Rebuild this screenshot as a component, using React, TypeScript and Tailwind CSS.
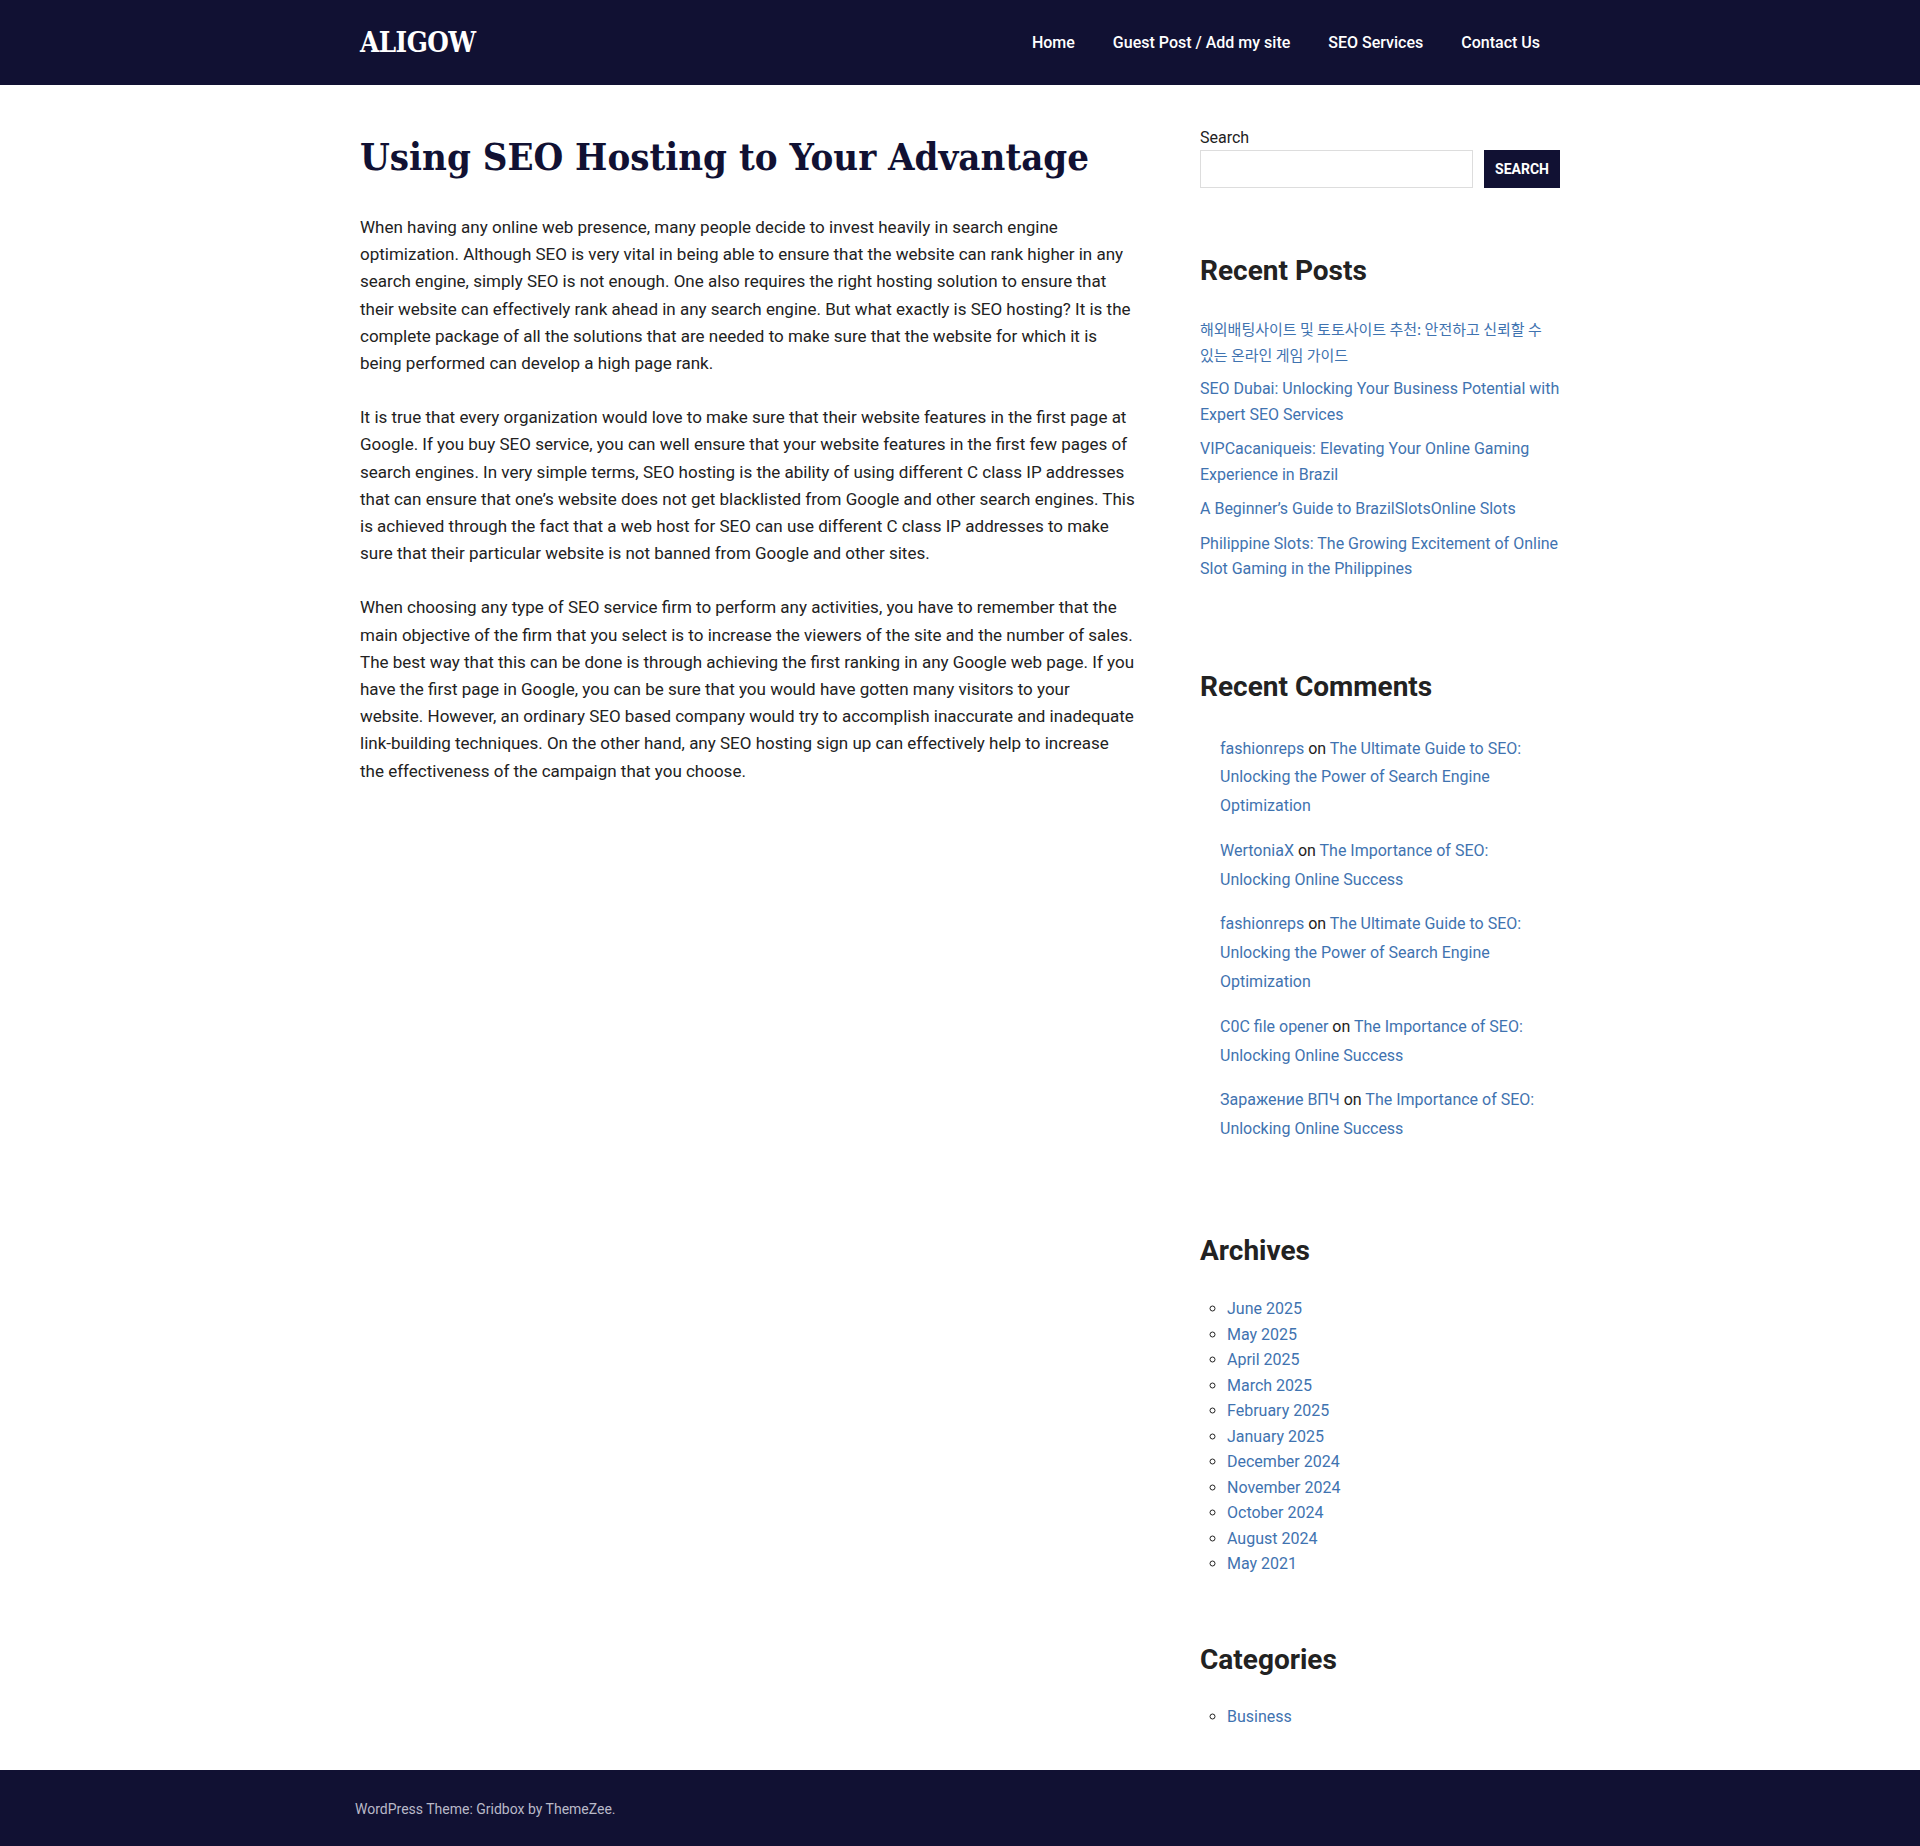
import type { ReactNode } from "react";

const recentPosts = [
  "해외배팅사이트 및 토토사이트 추천: 안전하고 신뢰할 수 있는 온라인 게임 가이드",
  "SEO Dubai: Unlocking Your Business Potential with Expert SEO Services",
  "VIPCacaniqueis: Elevating Your Online Gaming Experience in Brazil",
  "A Beginner’s Guide to BrazilSlotsOnline Slots",
  "Philippine Slots: The Growing Excitement of Online Slot Gaming in the Philippines",
];

const recentComments = [
  { author: "fashionreps", post: "The Ultimate Guide to SEO: Unlocking the Power of Search Engine Optimization" },
  { author: "WertoniaX", post: "The Importance of SEO: Unlocking Online Success" },
  { author: "fashionreps", post: "The Ultimate Guide to SEO: Unlocking the Power of Search Engine Optimization" },
  { author: "C0C file opener", post: "The Importance of SEO: Unlocking Online Success" },
  { author: "Заражение ВПЧ", post: "The Importance of SEO: Unlocking Online Success" },
];

const archives = [
  "June 2025",
  "May 2025",
  "April 2025",
  "March 2025",
  "February 2025",
  "January 2025",
  "December 2024",
  "November 2024",
  "October 2024",
  "August 2024",
  "May 2021",
];

const navItems = ["Home", "Guest Post / Add my site", "SEO Services", "Contact Us"];

const slab = "font-['DejaVu_Serif',serif] [font-stretch:condensed]";
const link = "text-[#3f73b0] hover:underline";

// hangul titles render wider in Noto CJK than in the original font, so they get a smaller size
const isKorean = (s: string) => /[\uac00-\ud7af]/.test(s);

function WidgetTitle({ children }: { children: ReactNode }) {
  return <h2 className="text-[28px] font-bold leading-[39px] text-[#222]">{children}</h2>;
}

function Header() {
  return (
    <header className="h-[85px] bg-[#111133]">
      <div className="mx-auto flex h-full w-[1200px] items-center justify-between">
        <a href="#" className={`${slab} text-[27.5px] font-bold tracking-[-0.5px] text-white`}>
          ALIGOW
        </a>
        <nav className="flex items-center">
          {navItems.map((item) => (
            <a key={item} href="#" className="px-[19px] text-[16px] font-medium text-white last:pr-[20px]">
              {item}
            </a>
          ))}
        </nav>
      </div>
    </header>
  );
}

function Article() {
  return (
    <main className="w-[775px] pt-[44px]">
      <h1 className={`${slab} mb-[29px] text-[38px] font-bold leading-[56px] text-[#111133]`}>
        Using SEO Hosting to Your Advantage
      </h1>
      <div className="text-[17px] leading-[27.2px] text-[#222]">
        <p className="mb-[27px]">
          When having any online web presence, many people decide to invest heavily in search engine
          optimization. Although SEO is very vital in being able to ensure that the website can rank higher in
          any search engine, simply SEO is not enough. One also requires the right hosting solution to ensure
          that their website can effectively rank ahead in any search engine. But what exactly is SEO hosting?
          It is the complete package of all the solutions that are needed to make sure that the website for
          which it is being performed can develop a high page rank.
        </p>
        <p className="mb-[27px]">
          It is true that every organization would love to make sure that their website features in the first
          page at Google. If you buy SEO service, you can well ensure that your website features in the first
          few pages of search engines. In very simple terms, SEO hosting is the ability of using different C
          class IP addresses that can ensure that one’s website does not get blacklisted from Google and other
          search engines. This is achieved through the fact that a web host for SEO can use different C class IP
          addresses to make sure that their particular website is not banned from Google and other sites.
        </p>
        <p>
          When choosing any type of SEO service firm to perform any activities, you have to remember that the
          main objective of the firm that you select is to increase the viewers of the site and the number of
          sales. The best way that this can be done is through achieving the first ranking in any Google web
          page. If you have the first page in Google, you can be sure that you would have gotten many visitors
          to your website. However, an ordinary SEO based company would try to accomplish inaccurate and
          inadequate link-building techniques. On the other hand, any SEO hosting sign up can effectively help
          to increase the effectiveness of the campaign that you choose.
        </p>
      </div>
    </main>
  );
}

function Sidebar() {
  return (
    <aside className="w-[360px] pt-[41px] pb-[41px] text-[16px] text-[#222]">
      <section>
        <label htmlFor="search" className="block leading-[24px]">
          Search
        </label>
        <div className="flex gap-[11px]">
          <input id="search" type="search" className="h-[38px] w-[273px] border border-[#dddddd] bg-white px-2 outline-none" />
          <button className="h-[38px] w-[76px] bg-[#111133] text-[14px] font-bold uppercase text-white">
            Search
          </button>
        </div>
      </section>

      <section className="mt-[63px]">
        <WidgetTitle>Recent Posts</WidgetTitle>
        <ul className="mt-[26px] flex flex-col gap-[9px] leading-[25.5px]">
          {recentPosts.map((post) => (
            <li key={post}>
              <a
                href="#"
                className={`${link} ${isKorean(post) ? "block font-['Noto_Sans_CJK_KR',sans-serif] text-[15px] break-keep" : ""}`}
              >
                {post}
              </a>
            </li>
          ))}
        </ul>
      </section>

      <section className="mt-[85px]">
        <WidgetTitle>Recent Comments</WidgetTitle>
        <ol className="mt-[29px] flex flex-col gap-[16px] pl-5 leading-[28.8px]">
          {recentComments.map((c, i) => (
            <li key={i}>
              <a href="#" className={link}>
                {c.author}
              </a>{" "}
              on{" "}
              <a href="#" className={link}>
                {c.post}
              </a>
            </li>
          ))}
        </ol>
      </section>

      <section className="mt-[87px]">
        <WidgetTitle>Archives</WidgetTitle>
        <ul className="mt-[26px] list-[circle] pl-[27px] leading-[25.5px]">
          {archives.map((a) => (
            <li key={a}>
              <a href="#" className={link}>
                {a}
              </a>
            </li>
          ))}
        </ul>
      </section>

      <section className="mt-[63px]">
        <WidgetTitle>Categories</WidgetTitle>
        <ul className="mt-[25px] list-[circle] pl-[27px] leading-[25.5px]">
          <li>
            <a href="#" className={link}>
              Business
            </a>
          </li>
        </ul>
      </section>
    </aside>
  );
}

function Footer() {
  return (
    <footer className="h-[78px] bg-[#111133]">
      <div className="mx-auto flex h-full w-[1210px] items-center">
        <span className="text-[14px] text-[#b9b9c8]">WordPress Theme: Gridbox by ThemeZee.</span>
      </div>
    </footer>
  );
}

export default function App() {
  return (
    <div className="min-h-screen bg-white font-['Roboto','Noto_Sans_CJK_KR',sans-serif]">
      <Header />
      <div className="mx-auto flex w-[1200px] justify-between">
        <Article />
        <Sidebar />
      </div>
      <Footer />
    </div>
  );
}
